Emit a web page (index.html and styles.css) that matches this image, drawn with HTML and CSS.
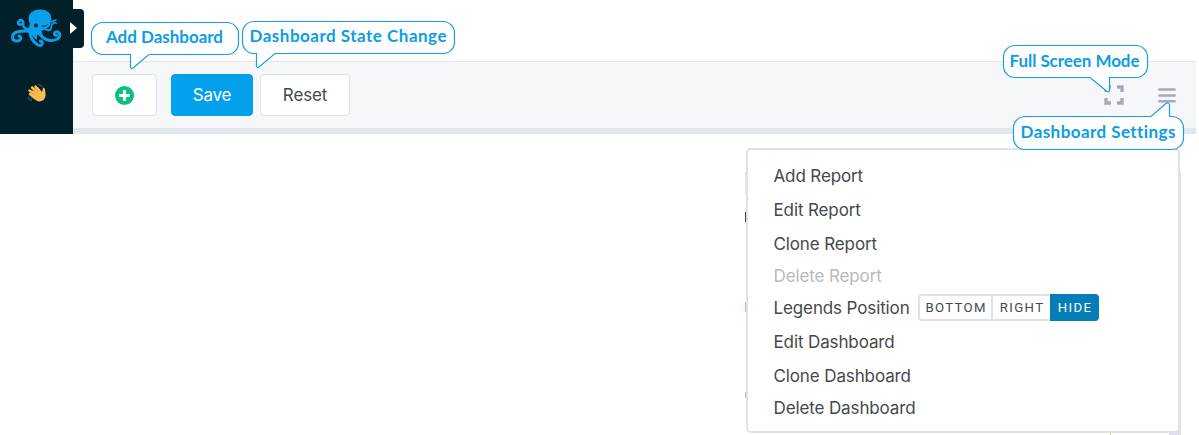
FILE: index.html
```html
<!DOCTYPE html>
<html lang="en">
<head>
<meta charset="utf-8">
<title>Dashboard</title>
<link rel="stylesheet" href="styles.css">
</head>
<body>
<div class="app">
  <aside class="sidebar">
    <svg class="logo" width="52" height="40" viewBox="0 0 52 40" fill="none" stroke="#0a9fea" stroke-linecap="round" stroke-linejoin="round">
      <path d="M20 16C16 8 21 1.500 30 1.500c9 0 13 6 10.500 12.500 0 3-1 5-3 6l-6 3 2 6-6-3-1 6-6-6-7-3 5-3z" fill="#0a9fea" stroke="none"/>
      <path d="M21 21c-5 1-8-1-8-5 1-3-2-5-4-3s-1 4 2 3.500" stroke-width="2.600"/>
      <path d="M20 21c-4 4-8 1-13 3-6 2-6 9 0 9 4 0 5-4 2-5" stroke-width="3"/>
      <path d="M20 23c0 6 3 11 8 14 4 2 6-3 2.500-4" stroke-width="3"/>
      <path d="M26 21c4 7 8 11 14 11.500 7 .5 11-3 9.500-7-1.500-3-6-2-5 1 .4 1 1 1 2 1" stroke-width="2.800"/>
      <path d="M33 20c4 3 8 3 8 0 0-4 3-6 5-5" stroke-width="1.800"/>
      <path d="M38 13c3 2 5 0 8-1" stroke-width="1.600"/>
      <circle cx="26" cy="17.500" r="2" fill="#01202a" stroke="none"/>
      <path d="M32 18c2 0 3 1 5-1" stroke="#01202a" stroke-width="1"/>
    </svg>
    <svg class="wave" width="22" height="22" viewBox="0 0 22 22" fill="none" stroke-linecap="round">
      <path d="M4 11l8-6 4 5 1-4c2-1 2 2 2.500 5 .5 4-1 7-4 8-3 1-5 0-7-2z" fill="#fdbd4c"/>
      <path d="M9 16l-5-4M10 13L3.500 8.500M11 10L6 5.500M13 9L9.500 4.500" stroke="#fdbd4c" stroke-width="2.500"/>
      <path d="M5 10.500l4 3M6.500 8l4 3.500M9 6l3.500 4" stroke="#d99031" stroke-width=".7"/>
      <path d="M12.500 2.500q3-.5 3.500 2.500M2 15.500q.5 3 3.500 3M4.500 15l1.500 1.500" stroke="#59666d"/>
    </svg>
    <button class="expand" aria-label="Expand"></button>
  </aside>
  <main class="main">
    <div class="toolbar">
      <button class="btn add" aria-label="Add">
        <svg width="20" height="20" viewBox="0 0 20 20"><circle cx="9.500" cy="10.500" r="9.500" fill="#05c27c"/><path d="M9.500 5v11M4 10.500h11" stroke="#fff" stroke-width="3.200"/></svg>
      </button>
      <button class="btn save">Save</button>
      <button class="btn reset">Reset</button>
      <svg class="full" width="20" height="20" viewBox="0 0 20 20" fill="none" stroke="#a9a8b8" stroke-width="3.400"><path d="M2 7V2h5M13 2h5v5M18 13v5h-5M7 18H2v-5"/></svg>
      <svg class="burger" width="18" height="16" viewBox="0 0 18 16" fill="none" stroke="#a9a8b8" stroke-width="2.600" stroke-linecap="round"><path d="M1.400 2.500h15.200M1.400 8.500h15.200M1.400 14.200h15.200"/></svg>
    </div>
  </main>
</div>

<div class="behind">
  <i class="edge"></i><i class="ink"></i><i class="green"></i><i class="blue"></i>
</div>
<div class="rail"></div>
<div class="tick"></div>
<ul class="menu">
  <li class="row"><span>Add Report</span></li>
  <li class="row"><span>Edit Report</span></li>
  <li class="row"><span>Clone Report</span></li>
  <li class="row short disabled"><span>Delete Report</span></li>
  <li class="row legends"><span>Legends Position</span>
    <div class="segments"><b class="seg bottom">BOTTOM</b><b class="seg right">RIGHT</b><b class="seg hide">HIDE</b></div>
  </li>
  <li class="row"><span>Edit Dashboard</span></li>
  <li class="row"><span>Clone Dashboard</span></li>
  <li class="row short"><span>Delete Dashboard</span></li>
</ul>

<svg class="callouts" width="1199" height="435" viewBox="0 0 1199 435">
  <g class="bubble">
    <path d="M103 22.500H227a11.500 11.500 0 0 1 11.500 11.500V43a11.500 11.500 0 0 1-11.500 11.500H149L133 68q-2 1.500-2.500-1V54.500H103A11.500 11.500 0 0 1 91.500 43V34A11.500 11.500 0 0 1 103 22.500z"/>
    <path d="M254 21.500H443a11.500 11.500 0 0 1 11.500 11.500V42a11.500 11.500 0 0 1-11.500 11.500H275L259 67q-2 1.500-2.500-1V53.500H254A11.500 11.500 0 0 1 242.500 42V33A11.500 11.500 0 0 1 254 21.500z"/>
    <path d="M1015 45.500H1136a11.500 11.500 0 0 1 11.500 11.500V66a11.500 11.500 0 0 1-11.500 11.500H1109.500V90q-.5 3-3 1L1090 77.500H1015A11.500 11.500 0 0 1 1003.500 66V57A11.500 11.500 0 0 1 1015 45.500z"/>
    <path d="M1025 116.500H1151L1166 103.500q2.500-1.500 3.500 1V116.500H1172a11.500 11.500 0 0 1 11.500 11.500V138a11.500 11.500 0 0 1-11.500 11.500H1025A11.500 11.500 0 0 1 1013.500 138V128A11.500 11.500 0 0 1 1025 116.500z"/>
  </g>
  <g class="label">
    <text x="106" y="43" textLength="117">Add Dashboard</text>
    <text x="249.500" y="42" textLength="197">Dashboard State Change</text>
    <text x="1009.500" y="67" textLength="130">Full Screen Mode</text>
    <text x="1020.500" y="138" textLength="155">Dashboard Settings</text>
  </g>
</svg>
</body>
</html>
```
FILE: styles.css
```css
* { box-sizing: border-box; }
body { margin: 0; width: 1199px; height: 435px; overflow: hidden; background: #fff; font-family: Inter, sans-serif; color: #45484c; position: relative; }
button { font: inherit; color: inherit; padding: 0; }
.app { display: flex; height: 134px; width: 1196px; }
.sidebar { position: relative; width: 73px; background: #01202a; flex: none; }
.logo { display: block; margin: 8px 0 0 10px; }
.wave { display: block; margin: 34px 0 0 26px; }
.expand { position: absolute; left: 73px; top: 9px; width: 11px; height: 39px; border: 0; border-radius: 0 4px 4px 0; background: #01202a; }
.expand::before { content: ""; position: absolute; left: -3px; top: 13px; border-left: 7px solid #fff; border-top: 6px solid transparent; border-bottom: 6px solid transparent; }
.main { flex: 1; padding-top: 61px; }
.toolbar { height: 73px; background: #f6f7fa; border-top: 1px solid #e3e6ed; border-bottom: 6px solid #e3e6ed; display: flex; align-items: center; padding: 0 20px 0 19px; }
.btn { height: 42px; border: 1px solid #dfe2ea; border-radius: 4px; background: #fff; font-size: 17px; letter-spacing: -.15px; display: flex; align-items: center; justify-content: center; }
.add { width: 65px; }
.save { width: 82px; margin-left: 14px; background: #03a0ec; border-color: #03a0ec; color: #fff; }
.reset { width: 90px; margin-left: 7px; }
.full { margin-left: auto; }
.burger { margin-left: 34px; }
.menu { position: absolute; left: 746px; top: 148px; width: 434px; height: 285px; margin: 0; padding: 9px 0 0 25.500px; list-style: none; background: #fff; border: 2px solid #dfe2ea; border-radius: 5px; }
.row { height: 34px; display: flex; align-items: center; font-size: 17px; letter-spacing: -.12px; white-space: nowrap; }
.short { height: 29px; }
.disabled { color: #b8babc; }
.legends { height: 35px; }
.segments { display: flex; margin-left: 8.500px; height: 27px; }
.seg { font-family: Roboto, sans-serif; font-weight: 400; font-size: 13.200px; letter-spacing: 1.350px; padding-left: 1px; border: 2px solid #dfe2ea; display: flex; align-items: center; justify-content: center; }
.bottom { width: 75px; border-radius: 4px 0 0 4px; }
.right { width: 57px; border-left: 0; border-right: 0; }
.hide { width: 49px; border-color: #047db8; background: #047db8; color: #fff; border-radius: 0 4px 4px 0; }
.behind i { position: absolute; left: 745px; width: 2px; }
.edge { top: 172px; height: 22px; background: #dfe2ea; }
.ink { top: 212px; height: 10px; background: #344052; }
.green { top: 302px; height: 10px; background: #93df71; }
.blue { top: 392px; height: 6px; background: #9dcce1; }
.rail { position: absolute; left: 1169px; top: 172px; width: 12px; height: 263px; background: #dfe2ea; }
.tick { position: absolute; left: 1110px; top: 433px; width: 1px; height: 2px; background: #93df71; }
.callouts { position: absolute; left: 0; top: 0; }
.bubble { fill: #fff; stroke: #169fe1; stroke-width: 1.200; }
.label { font: 700 17px Lato, sans-serif; fill: #0c9de6; font-variant-ligatures: none; }
```
